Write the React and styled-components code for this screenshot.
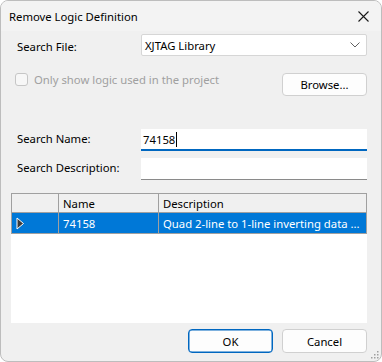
import React from "react";
import styled, { createGlobalStyle } from "styled-components";

const Global = createGlobalStyle`
  html, body { margin: 0; padding: 0; background: #ffffff; }
  * { box-sizing: border-box; }
`;

const Window = styled.div`
  width: 382px;
  height: 362px;
  border: 1px solid #bdbdbd;
  border-radius: 8px;
  background: #f0f0f0;
  overflow: hidden;
  display: flex;
  flex-direction: column;
  font-family: "Noto Sans", "Open Sans", sans-serif;
  font-size: 11.3px;
  color: #000;
  position: relative;
`;

const TitleBar = styled.div`
  height: 30px;
  flex: none;
  display: flex;
  align-items: center;
  justify-content: space-between;
  padding: 0 12px 0 8px;
  background: #f3f3f3;
`;

const Body = styled.div`
  flex: 1;
  padding: 3px 14px 0 10px;
  display: flex;
  flex-direction: column;
`;

const FieldRow = styled.div`
  display: grid;
  grid-template-columns: 124px 1fr;
  align-items: center;
  margin-top: ${p => p.top || 0}px;
  padding-left: 6px;
`;

const Label = styled.span`
  padding-top: ${p => (p.raised ? 0 : 2)}px;
  margin-top: ${p => (p.raised ? -4 : 0)}px;
`;

const Combo = styled.div`
  height: 22px;
  background: #ffffff;
  border: 1px solid #d6d6d6;
  border-radius: 2px;
  display: flex;
  align-items: center;
  justify-content: space-between;
  padding: 0 6px 0 3px;
`;

const Input = styled.div`
  height: 22px;
  background: #ffffff;
  border-bottom: ${p => (p.focused ? "2px solid #0067c0" : "1px solid #8a8a8a")};
  display: flex;
  align-items: center;
  padding: 0 2px;
`;

const Caret = styled.span`
  display: inline-block;
  width: 1px;
  height: 15px;
  background: #000;
  margin-left: 1px;
`;

const OptionRow = styled.div`
  display: flex;
  align-items: center;
  justify-content: space-between;
  margin-top: 17px;
  padding-left: 4px;
`;

const CheckLabel = styled.label`
  display: flex;
  align-items: center;
  gap: 6px;
  color: #a0a0a0;
  margin-top: -10px;
`;

const CheckBox = styled.span`
  width: 13px;
  height: 13px;
  border: 1px solid #c6c6c6;
  border-radius: 3px;
  background: #f7f7f7;
`;

const Button = styled.div`
  width: 85px;
  height: ${p => p.h || 24}px;
  background: #fdfdfd;
  border: 1px solid ${p => (p.primary ? "#0067c0" : "#d0d0d0")};
  box-shadow: ${p => (p.primary ? "inset 0 0 0 0.5px #0067c0" : "none")};
  border-radius: 4px;
  display: flex;
  align-items: center;
  justify-content: center;
`;

const Grid = styled.div`
  margin-top: 13px;
  height: 130px;
  background: #ffffff;
  display: flex;
  flex-direction: column;
`;

const GridRow = styled.div`
  display: grid;
  grid-template-columns: 47px 100px 1fr;
  height: ${p => (p.header ? 20 : 21)}px;
  background: ${p => (p.selected ? "#0078d7" : "#f0f0f0")};
  color: ${p => (p.selected ? "#ffffff" : "#000")};
`;

const GridCell = styled.div`
  border-left: 1px solid #a0a0a0;
  border-top: ${p => (p.header ? "1px solid #a0a0a0" : "none")};
  border-bottom: 1px solid #a0a0a0;
  border-right: ${p => (p.last ? "1px solid #a0a0a0" : "none")};
  display: flex;
  align-items: center;
  padding-left: 4px;
  white-space: nowrap;
  overflow: hidden;
`;

const Footer = styled.div`
  display: flex;
  justify-content: flex-end;
  gap: 9px;
  margin-top: 6px;
`;

const Grip = styled.svg`
  position: absolute;
  right: 2px;
  bottom: 2px;
`;

export default function App() {
  return (
    <>
      <Global />
      <Window>
        <TitleBar>
          <span>Remove Logic Definition</span>
          <svg width="11" height="11" viewBox="0 0 11 11">
            <path d="M0.5 0.5 L10.5 10.5 M10.5 0.5 L0.5 10.5" stroke="#1a1a1a" strokeWidth="1.1" />
          </svg>
        </TitleBar>
        <Body>
          <FieldRow>
            <Label>Search File:</Label>
            <Combo>
              <span>XJTAG Library</span>
              <svg width="10" height="6" viewBox="0 0 10 6">
                <path d="M0.5 0.5 L5 5 L9.5 0.5" fill="none" stroke="#606060" strokeWidth="1" />
              </svg>
            </Combo>
          </FieldRow>
          <OptionRow>
            <CheckLabel>
              <CheckBox />
              <span>Only show logic used in the project</span>
            </CheckLabel>
            <Button h={23}>Browse...</Button>
          </OptionRow>
          <FieldRow top={33}>
            <Label raised>Search Name:</Label>
            <Input focused>
              74158
              <Caret />
            </Input>
          </FieldRow>
          <FieldRow top={7}>
            <Label raised>Search Description:</Label>
            <Input />
          </FieldRow>
          <Grid>
            <GridRow header>
              <GridCell header />
              <GridCell header>Name</GridCell>
              <GridCell header last>Description</GridCell>
            </GridRow>
            <GridRow selected>
              <GridCell>
                <svg width="9" height="13" viewBox="0 0 9 13">
                  <path d="M1 1 L7.5 6.5 L1 12 Z" fill="#3a3a3a" stroke="#ffffff" strokeWidth="1" />
                </svg>
              </GridCell>
              <GridCell>74158</GridCell>
              <GridCell last>Quad 2-line to 1-line inverting data ...</GridCell>
            </GridRow>
          </Grid>
          <Footer>
            <Button primary>OK</Button>
            <Button>Cancel</Button>
          </Footer>
        </Body>
        <Grip width="8" height="8" viewBox="0 0 8 8">
          <rect x="6" y="0" width="1.5" height="1.5" fill="#a0a0a0" />
          <rect x="3" y="3" width="1.5" height="1.5" fill="#a0a0a0" />
          <rect x="6" y="3" width="1.5" height="1.5" fill="#a0a0a0" />
          <rect x="0" y="6" width="1.5" height="1.5" fill="#a0a0a0" />
          <rect x="3" y="6" width="1.5" height="1.5" fill="#a0a0a0" />
          <rect x="6" y="6" width="1.5" height="1.5" fill="#a0a0a0" />
        </Grip>
      </Window>
    </>
  );
}
